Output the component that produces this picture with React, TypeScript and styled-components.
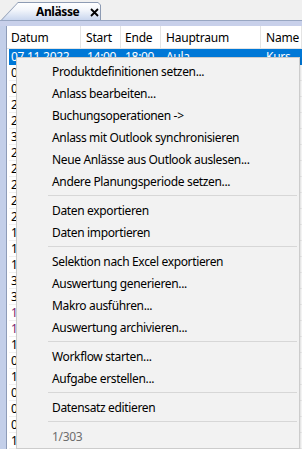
import React from "react";
import styled, { createGlobalStyle } from "styled-components";

const Global = createGlobalStyle`
  html, body { margin: 0; padding: 0; background: #f0f0f0; }
  body {
    font-family: "Noto Sans", "Open Sans", "DejaVu Sans", sans-serif;
    font-size: 12px;
    color: #000;
    overflow: hidden;
  }
`;

const Window = styled.div`
  position: relative;
  width: 302px;
  height: 449px;
  display: flex;
  flex-direction: column;
  background: #f0f0f0;
  overflow: hidden;
`;

const TabBar = styled.div`
  height: 20px;
  display: flex;
  align-items: flex-end;
  padding-left: 1px;
`;

const TabOuter = styled.div`
  width: 100px;
  height: 18px;
  padding: 1px 1px 0 1px;
  box-sizing: border-box;
  background: #8d9bb3;
  clip-path: polygon(0 100%, 17px 0, calc(100% - 3px) 0, 100% 3px, 100% 100%);
`;

const TabInner = styled.div`
  height: 100%;
  display: flex;
  align-items: center;
  background: linear-gradient(#ffffff 0%, #f3f6fb 40%, #c9d6ee 100%);
  clip-path: polygon(0 100%, 16px 0, calc(100% - 2px) 0, 100% 2px, 100% 100%);
  padding-left: 34px;
  gap: 11px;
`;

const TabLabel = styled.span`
  font-weight: bold;
  font-size: 12px;
  letter-spacing: -0.4px;
  line-height: 16px;
`;

const CloseIcon = styled.svg`
  width: 9px;
  height: 9px;
  margin-top: 2px;
`;

const Band = styled.div`
  height: 6px;
  background: #c8d0ea;
  border-top: 1px solid #98a6c2;
  box-sizing: border-box;
`;

const Body = styled.div`
  flex: 1;
  display: flex;
  min-height: 0;
`;

const SideStrip = styled.div`
  width: 6px;
  background: #c3cfe9;
  border-right: 1px solid #8e9cb8;
`;

const Grid = styled.div`
  flex: 1;
  background: #ffffff;
  display: flex;
  flex-direction: column;
  min-width: 0;
`;

const HeaderRow = styled.div`
  height: 23px;
  display: grid;
  grid-template-columns: 74px 40px 40px 100px 1fr;
  border-bottom: 1px solid #e4e4e4;
`;

const HeaderCell = styled.div<{ $pad: number }>`
  display: flex;
  align-items: center;
  padding-left: ${(p) => p.$pad}px;
  border-right: 1px solid #e4e4e4;
  white-space: nowrap;
  overflow: hidden;
  letter-spacing: -0.2px;
`;

const Rows = styled.div`
  padding-left: 2px;
  display: flex;
  flex-direction: column;
`;

const Row = styled.div<{ $sel?: boolean; $tone?: string }>`
  height: 16px;
  display: grid;
  grid-template-columns: 72px 40px 40px 100px 1fr;
  background: ${(p) => (p.$sel ? "#0078d7" : "#ffffff")};
  color: ${(p) => (p.$sel ? "#ffffff" : p.$tone || "#000000")};
  border-bottom: ${(p) => (p.$sel ? "0" : "1px solid #f0f0f0")};
  box-sizing: border-box;
  font-size: 12px;
  line-height: 16px;
  letter-spacing: -0.3px;
`;

const Cell = styled.div<{ $pad: number }>`
  padding-left: ${(p) => p.$pad}px;
  white-space: nowrap;
  overflow: hidden;
`;

const Menu = styled.div`
  position: absolute;
  left: 16px;
  top: 57px;
  width: 284px;
  box-sizing: border-box;
  background: #f2f2f2;
  border: 1px solid #cccccc;
  padding: 2px 0 1px 0;
  box-shadow: 1px 1px 2px rgba(0, 0, 0, 0.15);
  display: flex;
  flex-direction: column;
`;

const Item = styled.div<{ $disabled?: boolean }>`
  height: 22px;
  display: flex;
  align-items: center;
  padding-left: 35px;
  color: ${(p) => (p.$disabled ? "#6d6d6d" : "#000000")};
  white-space: nowrap;
  letter-spacing: -0.35px;
`;

const Separator = styled.div`
  height: 7px;
  display: flex;
  align-items: center;
  padding-left: 31px;
  padding-right: 2px;
  &::after {
    content: "";
    flex: 1;
    height: 1px;
    background: #d7d7d7;
  }
`;

type Entry = { t: string; disabled?: boolean } | "sep";

const menu: Entry[] = [
  { t: "Produktdefinitionen setzen..." },
  { t: "Anlass bearbeiten..." },
  { t: "Buchungsoperationen ->" },
  { t: "Anlass mit Outlook synchronisieren" },
  { t: "Neue Anlässe aus Outlook auslesen..." },
  { t: "Andere Planungsperiode setzen..." },
  "sep",
  { t: "Daten exportieren" },
  { t: "Daten importieren" },
  "sep",
  { t: "Selektion nach Excel exportieren" },
  { t: "Auswertung generieren..." },
  { t: "Makro ausführen..." },
  { t: "Auswertung archivieren..." },
  "sep",
  { t: "Workflow starten..." },
  { t: "Aufgabe erstellen..." },
  "sep",
  { t: "Datensatz editieren" },
  "sep",
  { t: "1/303", disabled: true },
];

const dates = [
  "07.11.2022", "03.11.2022", "02.11.2022", "28.10.2022", "27.10.2022",
  "31.10.2022", "26.10.2022", "25.10.2022", "24.10.2022", "21.10.2022",
  "20.10.2022", "19.10.2022", "18.10.2022", "17.10.2022", "30.09.2022",
  "30.09.2022", "14.09.2022", "13.09.2022", "12.09.2022", "09.09.2022",
  "11.08.2022", "08.08.2022", "05.08.2022", "04.08.2022", "10.07.2022",
];

const purple = new Set([16, 17]);

export default function App() {
  return (
    <>
      <Global />
      <Window>
        <TabBar>
          <TabOuter>
            <TabInner>
              <TabLabel>Anlässe</TabLabel>
              <CloseIcon viewBox="0 0 9 9">
                <path d="M1 1 L8 8 M8 1 L1 8" stroke="#000" strokeWidth="1.8" />
              </CloseIcon>
            </TabInner>
          </TabOuter>
        </TabBar>
        <Band />
        <Body>
          <SideStrip />
          <Grid>
            <HeaderRow>
              <HeaderCell $pad={4}>Datum</HeaderCell>
              <HeaderCell $pad={5}>Start</HeaderCell>
              <HeaderCell $pad={4}>Ende</HeaderCell>
              <HeaderCell $pad={5}>Hauptraum</HeaderCell>
              <HeaderCell $pad={5}>Name</HeaderCell>
            </HeaderRow>
            <Rows>
              {dates.map((d, i) => (
                <Row key={i} $sel={i === 0} $tone={purple.has(i) ? "#7a1f6e" : undefined}>
                  <Cell $pad={2}>{d}</Cell>
                  <Cell $pad={6}>14:00</Cell>
                  <Cell $pad={4}>18:00</Cell>
                  <Cell $pad={5}>Aula</Cell>
                  <Cell $pad={5}>Kurs</Cell>
                </Row>
              ))}
            </Rows>
          </Grid>
        </Body>
        <Menu>
          {menu.map((e, i) =>
            e === "sep" ? (
              <Separator key={i} />
            ) : (
              <Item key={i} $disabled={e.disabled}>
                {e.t}
              </Item>
            )
          )}
        </Menu>
      </Window>
    </>
  );
}
